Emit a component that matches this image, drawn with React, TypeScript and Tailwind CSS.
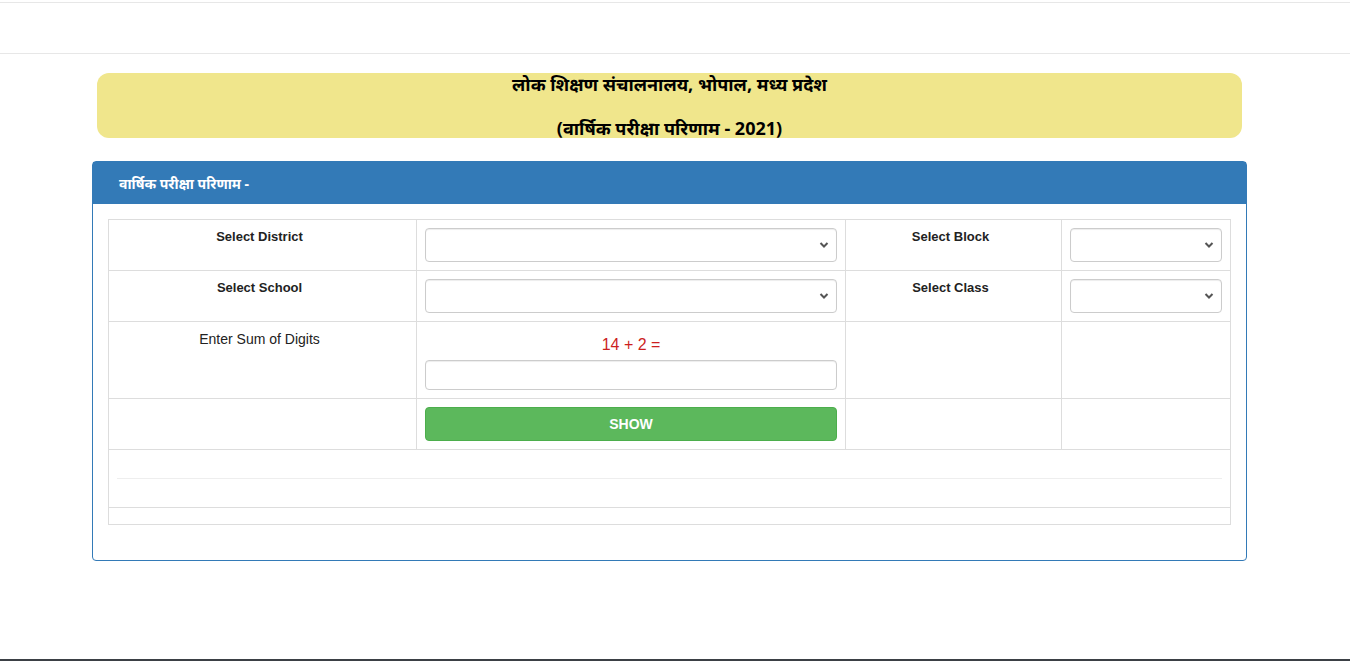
import { useState } from "react";

function Chevron() {
  return (
    <svg
      className="pointer-events-none absolute right-[8px] top-1/2 -translate-y-1/2"
      width="10"
      height="7"
      viewBox="0 0 10 7"
    >
      <path d="M1.5 1.5 L5 5 L8.5 1.5" fill="none" stroke="#555" strokeWidth="2" />
    </svg>
  );
}

function SelectBox() {
  return (
    <div className="relative h-[34px] w-full">
      <select className="h-full w-full appearance-none rounded-[4px] border border-[#ccc] bg-white px-3 text-[14px] text-[#555] shadow-[inset_0_1px_1px_rgba(0,0,0,0.075)] outline-none">
        <option value=""></option>
      </select>
      <Chevron />
    </div>
  );
}

const cell = "border border-[#ddd] p-[8px] align-top";
const label = "pr-[6px] text-center text-[13px] font-bold leading-[18px] text-[#222]";

export default function App() {
  const [answer, setAnswer] = useState("");

  return (
    <div
      className="flex h-[661px] flex-col bg-white"
      style={{ fontFamily: '"Liberation Sans", Arial, sans-serif' }}
    >
      {/* top nav strip */}
      <div className="mt-[2px] h-[52px] border-y border-[#e7e7e7]" />

      <div className="ml-[92px] w-[1155px]">
        {/* title banner */}
        <div
          className="mx-[5px] mt-[19px] h-[65px] rounded-[12px] bg-[#f0e68c] text-center text-[18px] font-bold text-black"
          style={{ fontFamily: '"Noto Sans", "Liberation Sans", sans-serif' }}
        >
          <div className="leading-[22px]">लोक शिक्षण संचालनालय, भोपाल, मध्य प्रदेश</div>
          <div className="mt-[22px] leading-[22px]">(वार्षिक परीक्षा परिणाम - 2021)</div>
        </div>

        {/* panel */}
        <div className="mt-[23px] rounded-[4px] border border-[#337ab7] bg-white">
          <div
            className="flex h-[42px] items-center bg-[#337ab7] pl-[26px] text-[14px] font-bold text-white"
            style={{ fontFamily: '"Noto Sans", "Liberation Sans", sans-serif' }}
          >
            वार्षिक परीक्षा परिणाम -
          </div>

          <div className="px-[15px] pt-[15px] pb-[35px]">
            <table className="w-[1122px] table-fixed border-collapse border border-[#ddd]">
              <colgroup>
                <col className="w-[308px]" />
                <col className="w-[429px]" />
                <col className="w-[216px]" />
                <col className="w-[169px]" />
              </colgroup>
              <tbody>
                <tr>
                  <td className={cell}>
                    <div className={label}>Select District</div>
                  </td>
                  <td className={cell}>
                    <SelectBox />
                  </td>
                  <td className={cell}>
                    <div className={label}>Select Block</div>
                  </td>
                  <td className={cell}>
                    <SelectBox />
                  </td>
                </tr>
                <tr>
                  <td className={cell}>
                    <div className={label}>Select School</div>
                  </td>
                  <td className={cell}>
                    <SelectBox />
                  </td>
                  <td className={cell}>
                    <div className={label}>Select Class</div>
                  </td>
                  <td className={cell}>
                    <SelectBox />
                  </td>
                </tr>
                <tr>
                  <td className={cell}>
                    <div className="pr-[6px] text-center text-[14px] leading-[18px] text-[#222]">
                      Enter Sum of Digits
                    </div>
                  </td>
                  <td className="border border-[#ddd] px-[8px] pt-[12px] pb-[8px] align-top">
                    <div className="text-center text-[16px] leading-[22px] text-[#cc1f1f]">14 + 2 =</div>
                    <input
                      value={answer}
                      onChange={(e) => setAnswer(e.target.value)}
                      className="mt-[4px] h-[30px] w-full rounded-[4px] border border-[#ccc] px-3 text-[14px] shadow-[inset_0_1px_1px_rgba(0,0,0,0.075)] outline-none"
                    />
                  </td>
                  <td className={cell} />
                  <td className={cell} />
                </tr>
                <tr>
                  <td className={cell} />
                  <td className={cell}>
                    <button className="h-[34px] w-full rounded-[4px] border border-[#4cae4c] bg-[#5cb85c] text-[14px] font-bold text-white">
                      SHOW
                    </button>
                  </td>
                  <td className={cell} />
                  <td className={cell} />
                </tr>
                <tr>
                  <td colSpan={4} className="h-[58px] border border-[#ddd] px-[8px] align-middle">
                    <hr className="border-t border-[#eee]" />
                  </td>
                </tr>
                <tr>
                  <td colSpan={4} className="h-[17px] border border-[#ddd]" />
                </tr>
              </tbody>
            </table>
          </div>
        </div>
      </div>

      <div className="flex-1" />
      <div className="h-[2px] bg-[#3b4045]" />
    </div>
  );
}
